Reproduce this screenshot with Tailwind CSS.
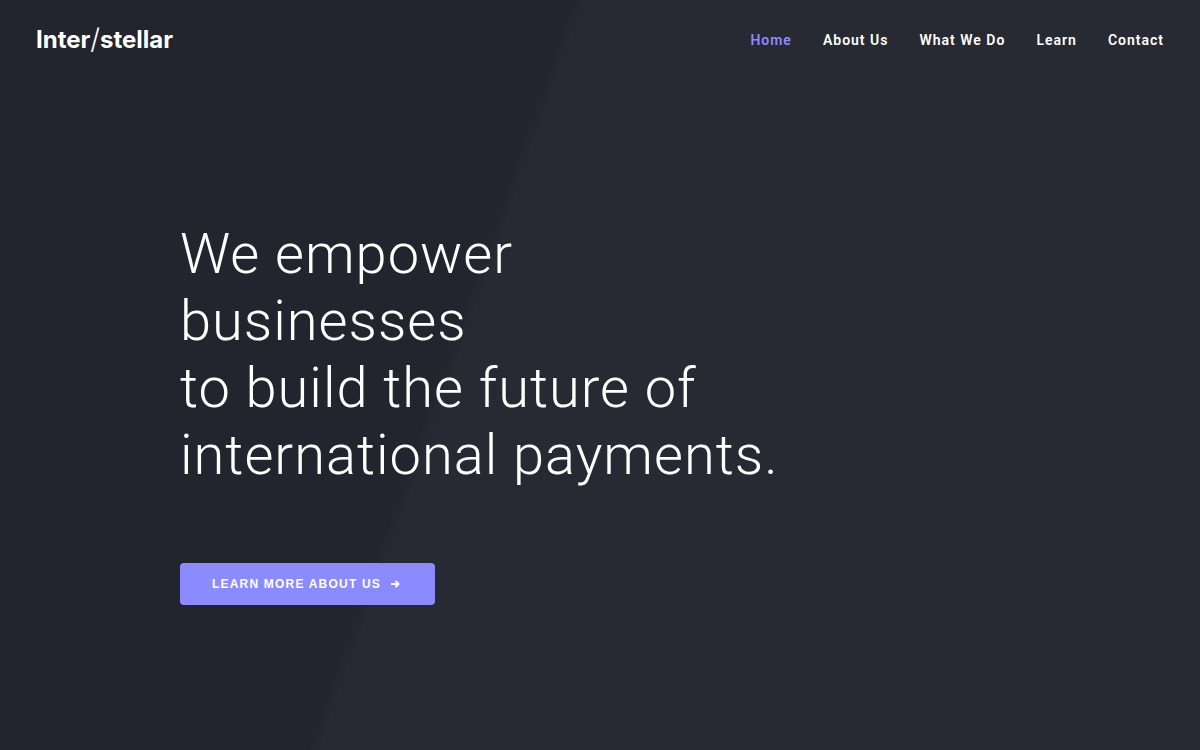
<!DOCTYPE html>
<html lang="en">
<head>
  <meta charset="UTF-8" />
  <meta name="viewport" content="width=device-width, initial-scale=1.0" />
  <title>Inter/stellar</title>
  <script src="https://cdn.jsdelivr.net/npm/@tailwindcss/browser@4"></script>
</head>
<body class="min-h-screen flex flex-col bg-[#22252d] bg-[linear-gradient(109.5deg,#22252d_39%,#272a32_40%)] text-white font-['Roboto',sans-serif]">
  <!-- Header -->
  <header class="flex justify-between items-center px-9 h-20">
    <a href="#" class="flex items-center text-2xl font-bold font-['Inter',sans-serif]">Inter<span class="text-[28px] font-light">/</span>stellar</a>
    <nav class="flex gap-[31px] text-sm font-semibold tracking-[1px]">
      <a href="#" class="text-[#8c8aff]">Home</a>
      <a href="#" class="hover:text-[#8c8aff]">About Us</a>
      <a href="#" class="hover:text-[#8c8aff]">What We Do</a>
      <a href="#" class="hover:text-[#8c8aff]">Learn</a>
      <a href="#" class="hover:text-[#8c8aff]">Contact</a>
    </nav>
  </header>

  <!-- Hero -->
  <main class="w-full max-w-[840px] mx-auto pt-[141px] pb-20">
    <h1 class="text-[56px] leading-[67px] font-light tracking-[1px]">
      We empower<br />
      businesses<br />
      to build the future of<br />
      international payments.
    </h1>
    <button type="button" class="mt-[74px] h-[42px] px-8 inline-flex items-center gap-2.5 rounded bg-[#8c8aff] text-xs font-bold tracking-widest uppercase font-['Liberation_Sans',sans-serif] hover:bg-[#7b79f0]">
      Learn more about us
      <svg class="w-3 h-3" viewBox="0 0 12 12" fill="none" stroke="currentColor" stroke-width="2">
        <path d="M0 6h8M4.5 3l3 3-3 3" />
      </svg>
    </button>
  </main>
</body>
</html>
